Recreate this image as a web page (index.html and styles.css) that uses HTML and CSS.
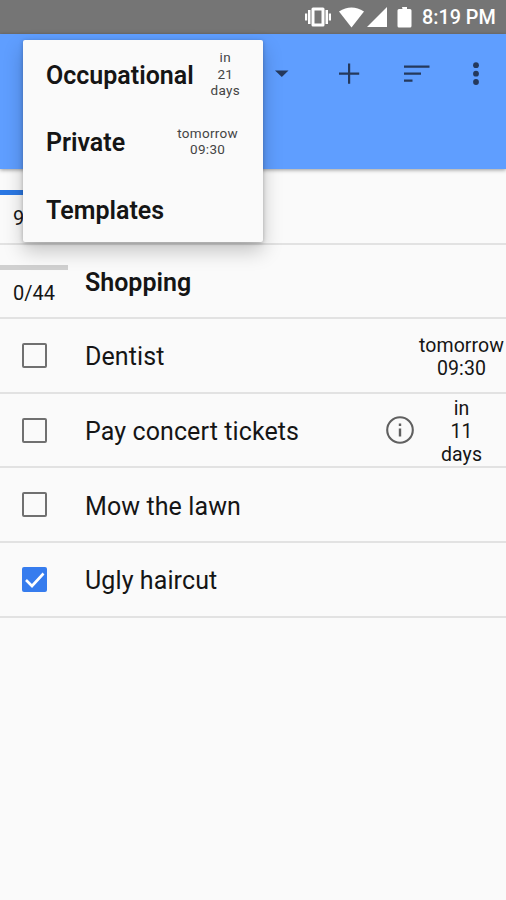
FILE: index.html
```html
<!DOCTYPE html>
<html lang="en">
<head>
<meta charset="utf-8">
<title>Tasks</title>
<link rel="stylesheet" href="styles.css">
</head>
<body>
<div class="statusbar">
  <svg class="status-icons" width="112" height="34" viewBox="0 0 112 34" fill="#fff">
    <path fill-rule="evenodd" d="M9 7.500h10q1.500 0 1.500 1.500v16q0 1.500-1.500 1.500h-10q-1.500 0-1.500-1.500v-16q0-1.500 1.500-1.500zM10.500 10.500v13h7v-13z"/>
    <path d="M4 10h2.500v14H4zM1 13.500h2.200v7H1zM21.500 10H24v14h-2.500zM24.800 13.500H27v7h-2.200z"/>
    <path d="M35 11.500Q47.500 3.500 60 11.500L47.500 27.500z"/>
    <path d="M83 7v20h-20z"/>
    <path d="M98 7h5v2h3q1.500 0 1.500 1.500v15.500q0 1.500-1.500 1.500h-11q-1.500 0-1.500-1.500V10.500q0-1.500 1.500-1.500h3.500z"/>
  </svg>
  <span class="clock">8:19 PM</span>
</div>
<header class="appbar">
  <svg class="actions" width="226" height="40" viewBox="0 0 226 40" fill="#25395c">
    <path d="M-5 16.500H8.500L1.800 23z"/>
    <path d="M68 9.500h2.200v9h9v2.200h-9v9H68v-9h-9v-2.200h9z"/>
    <path d="M124 11.500h25.500v2.300H124zM124 18.500h17v2.300h-17zM124 25.500h8.500v2.300H124z"/>
    <circle cx="196" cy="11.200" r="2.900"/><circle cx="196" cy="19.700" r="2.900"/><circle cx="196" cy="28" r="2.900"/>
  </svg>
</header>
<main class="list">
  <div class="row first"><div class="lead"><div class="track done"></div><span class="count">9</span></div></div>
  <div class="row"><div class="lead"><div class="track"></div><span class="count">0/44</span></div><div class="title strong"><span>Shopping</span></div></div>
  <div class="row"><div class="lead"><span class="box"></span></div><div class="title"><span>Dentist</span></div><div class="due">tomorrow<br>09:30</div></div>
  <div class="row"><div class="lead"><span class="box"></span></div><div class="title"><span>Pay concert tickets</span></div>
    <svg class="info" width="30" height="30" viewBox="0 0 30 30"><circle cx="15" cy="15" r="12.800" fill="none" stroke="#606060" stroke-width="2.100"/><path d="M13.800 8.500h2.400v2.500h-2.400zM13.800 13.500h2.400v8h-2.400z" fill="#606060"/></svg>
    <div class="due">in<br>11<br>days</div></div>
  <div class="row"><div class="lead"><span class="box"></span></div><div class="title"><span>Mow the lawn</span></div></div>
  <div class="row"><div class="lead"><span class="box checked"><svg width="25" height="25" viewBox="0 0 25 25"><path d="M4 13l6 6L21.500 6.500" fill="none" stroke="#fff" stroke-width="2.600"/></svg></span></div><div class="title"><span>Ugly haircut</span></div></div>
</main>
<div class="menu">
  <div class="item"><span class="name">Occupational</span><span class="when">in<br>21<br>days</span></div>
  <div class="item"><span class="name">Private</span><span class="when wide">tomorrow<br>09:30</span></div>
  <div class="item"><span class="name">Templates</span></div>
</div>
</body>
</html>
```
FILE: styles.css
```css
* { box-sizing: border-box; }
body {
  margin: 0;
  height: 900px;
  overflow: hidden;
  position: relative;
  background: #fafafa;
  color: #151515;
  font-family: Roboto, sans-serif;
}
svg { display: block; flex: none; }
.statusbar {
  height: 34px;
  background: #757575;
  display: flex;
  align-items: center;
  padding-left: 304px;
}
.status-icons { margin-right: 6px; }
.clock { color: #fff; font-size: 19.800px; font-weight: 500; line-height: 34px; padding-top: 2px; white-space: nowrap; }
.appbar {
  height: 135px;
  background: #5f9eff;
  box-shadow: 0 1px 4px rgba(0, 0, 0, .4);
  padding: 20px 0 0 280px;
}
.actions { overflow: visible; }
.list { padding-top: 1px; }
.row {
  height: 74.600px;
  border-bottom: 2px solid #e2e2e2;
  display: flex;
  align-items: center;
}
.lead {
  width: 68px;
  height: 100%;
  flex: none;
  display: flex;
  flex-direction: column;
  align-items: center;
  justify-content: center;
}
.track { width: 68px; height: 5px; background: #d0d0d0; margin-bottom: 9px; }
.track.done { background: #2b78e4; }
.count { font-size: 20px; line-height: 28px; }
.row .lead:has(.track) { justify-content: flex-start; padding-top: 20px; }
.first .count { align-self: flex-start; padding-left: 13px; }
.box { width: 25px; height: 25px; border: 2px solid #707070; border-radius: 2px; }
.box.checked { border: 0; background: #367cee; }
.title { flex: 1; padding: 3px 0 0 17px; font-size: 25px; letter-spacing: .1px; white-space: nowrap; }
.title.strong { font-weight: 600; letter-spacing: 0; }
.due { width: 89px; text-align: center; font-size: 19.500px; line-height: 23px; letter-spacing: .1px; padding-top: 3px; }
.info { margin-right: 2px; }
.menu {
  position: absolute;
  left: 23px;
  top: 40px;
  width: 240px;
  height: 202px;
  background: #fafafa;
  border-radius: 2px;
  box-shadow: 0 9px 20px rgba(0, 0, 0, .22), 0 1px 4px rgba(0, 0, 0, .25);
}
.item { height: 67.500px; padding: 0 23px; display: flex; align-items: center; justify-content: space-between; }
.name { font-size: 25px; font-weight: 600; padding-top: 3px; }
.when { font-size: 13.500px; line-height: 16.500px; text-align: center; letter-spacing: .3px; color: #444; }
.when.wide { margin-right: 2px; }
```
